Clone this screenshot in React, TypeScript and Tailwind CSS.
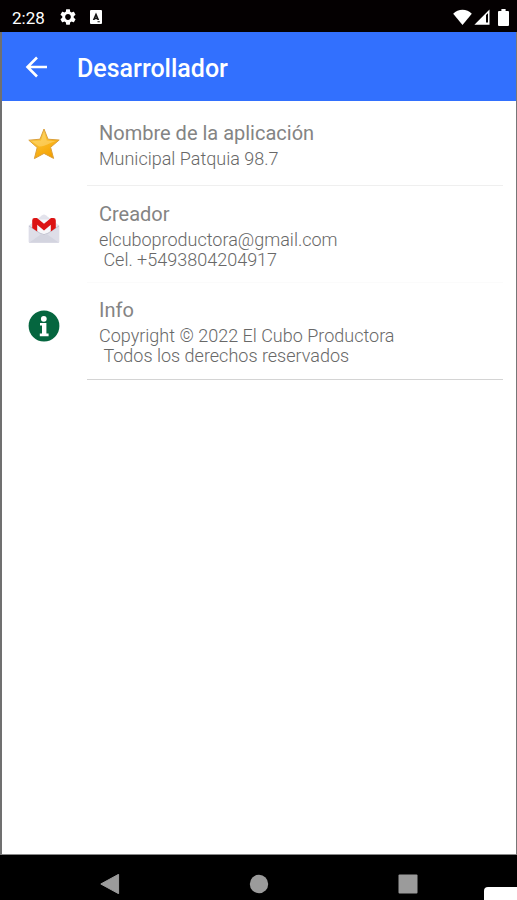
import React from "react";

type InfoItem = {
  title: string;
  lines: string[];
  icon: React.ReactNode;
  rowClass: string;
};

const StarIcon = () => (
  <svg viewBox="0 0 32 32" className="size-8" aria-hidden="true">
    <defs>
      <linearGradient id="star" x1="0" y1="0" x2="0.6" y2="1">
        <stop offset="0" stopColor="#f8d77a" />
        <stop offset="0.45" stopColor="#fbbf2c" />
        <stop offset="1" stopColor="#f5a100" />
      </linearGradient>
    </defs>
    <path
      d="M16 1 20 11.2 31.2 12 22.6 19.3 25.6 30.4 16 25.4 6.4 30.6 9.2 19.5.8 12.2 12 11.2Z"
      fill="url(#star)"
      stroke="#dba03c"
      strokeWidth="1"
      strokeLinejoin="round"
    />
    <path d="M16 4 18.8 12.4 28 13.2C22 14 17 19 11 18.4L4 13.2 13 12.4Z" fill="#fdd97a" opacity="0.55" />
  </svg>
);

const MailIcon = () => (
  <svg viewBox="0 0 32 32" className="size-8" aria-hidden="true">
    <path d="M.8 12.5 14.2 2.2Q16 1 17.8 2.2L31.2 12.5V29Q31.2 30 30.2 30H1.8Q.8 30 .8 29Z" fill="#e3e3ec" />
    <path d="M4.5 6.5H27.5V18L16 24 4.5 18Z" fill="#f7f7fa" />
    <path d="M.8 12.6 12 20.2Q16 23 20 20.2L31.2 12.6V29Q31.2 30 30.2 30H1.8Q.8 30 .8 29Z" fill="#dedee8" />
    <path d="M1.4 29.4 13 21.2Q16 23 19 21.2L30.6 29.4Z" fill="#d3d4df" />
    <path d="M1 13 12 20.2Q16 23 20 20.2L31 13" fill="none" stroke="#b9bac8" strokeWidth="0.8" />
    <path
      d="M4.2 15V7.4Q4.2 5 6.6 5H9L16 10.8 23 5H25.4Q27.8 5 27.8 7.4V15L22.8 18.4V11.8L16 17.4 9.2 11.8V18.4Z"
      fill="#dc1414"
    />
  </svg>
);

const InfoIcon = () => (
  <svg viewBox="0 0 32 32" className="size-8" aria-hidden="true">
    <circle cx="16" cy="16" r="15.4" fill="#05663f" />
    <circle cx="15.8" cy="8.8" r="2.9" fill="#fff" />
    <path d="M12 13H18.4V23.4H20.6V26.2H11.8V23.4H14V15.6H12Z" fill="#fff" />
  </svg>
);

const items: InfoItem[] = [
  {
    title: "Nombre de la aplicación",
    lines: ["Municipal Patquia 98.7"],
    icon: <StarIcon />,
    rowClass: "pt-[18px] pb-4 border-[#efefef]",
  },
  {
    title: "Creador",
    lines: ["elcuboproductora@gmail.com", " Cel. +5493804204917"],
    icon: <MailIcon />,
    rowClass: "pt-[14px] pb-3 border-[#fbfbfb]",
  },
  {
    title: "Info",
    lines: ["Copyright © 2022 El Cubo Productora", " Todos los derechos reservados"],
    icon: <InfoIcon />,
    rowClass: "pt-[13px] pb-[13px] border-[#d4d4d4]",
  },
];

const StatusBar = () => (
  <div className="flex h-8 items-center justify-between bg-[#040001] pr-2 pl-3 text-white">
    <div className="flex items-center">
      <span className="pt-1 text-[17px] leading-5">2:28</span>
      <svg viewBox="2 2 20 20" className="ml-[15px] mt-[2px] size-4" fill="#fff" aria-hidden="true">
        <path d="M19.14 12.94c.04-.3.06-.61.06-.94s-.02-.64-.07-.94l2.03-1.58c.18-.14.23-.41.12-.61l-1.92-3.32c-.12-.22-.37-.29-.59-.22l-2.39.96c-.5-.38-1.03-.7-1.62-.94l-.36-2.54c-.04-.24-.24-.41-.48-.41h-3.84c-.24 0-.43.17-.47.41l-.36 2.54c-.59.24-1.13.57-1.62.94l-2.39-.96c-.22-.08-.47 0-.59.22L2.74 8.87c-.12.21-.08.47.12.61l2.03 1.58c-.05.3-.09.63-.09.94s.02.64.07.94l-2.03 1.58c-.18.14-.23.41-.12.61l1.92 3.32c.12.22.37.29.59.22l2.39-.96c.5.38 1.03.7 1.62.94l.36 2.54c.05.24.24.41.48.41h3.84c.24 0 .44-.17.47-.41l.36-2.54c.59-.24 1.13-.56 1.62-.94l2.39.96c.22.08.47 0 .59-.22l1.92-3.32c.12-.22.07-.47-.12-.61l-2.01-1.58zM12 15.6c-1.98 0-3.6-1.62-3.6-3.6s1.62-3.6 3.6-3.6 3.6 1.62 3.6 3.6-1.62 3.6-3.6 3.6z" />
      </svg>
      <svg viewBox="0 0 12 14" className="ml-[14px] mt-[2px] h-[14px] w-3" aria-hidden="true">
        <rect width="12" height="14" rx="1" fill="#fff" />
        <path d="M2.8 10 6 2.6 9.2 10H7.4L6 6.4 4.6 10Z" fill="#111" />
        <path d="M5 7.4H7V9.2H5ZM7.5 11.3H9.8V12.3H7.5Z" fill="#111" />
      </svg>
    </div>
    <div className="flex items-center pt-[2px]">
      <svg viewBox="0 0 19 16" className="h-4 w-[19px]" fill="#fff" aria-hidden="true">
        <path d="M9.5 16 .2 4.8C5-.6 14-.6 18.8 4.8Z" />
      </svg>
      <svg viewBox="0 0 16 16" className="ml-[2px] size-4" fill="#fff" aria-hidden="true">
        <path d="M15.5.5V15.8H.4ZM12 6V13.4H14V4.2Z" fillRule="evenodd" />
      </svg>
      <svg viewBox="0 0 11 17" className="ml-2 h-[17px] w-[11px]" fill="#fff" aria-hidden="true">
        <path d="M3.4 0H7.6V2H10Q11 2 11 3V16Q11 17 10 17H1Q0 17 0 16V3Q0 2 1 2H3.4Z" />
      </svg>
    </div>
  </div>
);

const InfoRow = ({ item }: { item: InfoItem }) => (
  <li className="flex">
    <div className="w-[85px] shrink-0 pt-[27px] pl-[26px]">{item.icon}</div>
    <div className={`mr-[13px] flex-1 border-b pl-3 ${item.rowClass}`}>
      <h2 className="text-xl leading-7 font-normal text-[#848484]">{item.title}</h2>
      <p className="mt-[2px] text-lg leading-5 font-light whitespace-pre-wrap text-[#686868]">
        {item.lines.join("\n")}
      </p>
    </div>
  </li>
);

const App = () => {
  return (
    <div className="flex min-h-screen flex-col bg-black font-[Roboto,sans-serif]">
      <StatusBar />
      <div className="flex flex-1 flex-col border-r border-b border-l-2 border-r-[#777] border-b-[#888] border-l-[#707070] bg-white">
        <header className="flex h-[69px] items-center bg-[#3270fe] pl-[23px] text-white">
          <button type="button" aria-label="Volver" className="size-6">
            <svg viewBox="0 0 24 24" className="size-6" fill="none" stroke="#fff" strokeWidth="2.6" aria-hidden="true">
              <path d="M22 12H3M12 2.5 2.5 12 12 21.5" />
            </svg>
          </button>
          <h1 className="ml-7 pt-1 text-[25px] leading-8 font-medium">Desarrollador</h1>
        </header>
        <main>
          <ul>
            {items.map((item) => (
              <InfoRow key={item.title} item={item} />
            ))}
          </ul>
        </main>
      </div>
      <nav className="flex h-[45px] items-start justify-center pt-[19px]">
        <button type="button" aria-label="Atrás" className="flex w-[149px] justify-center">
          <svg viewBox="0 0 20 20" className="size-5" aria-hidden="true">
            <path d="M.8 10 18.6.3V19.7Z" fill="#9b9b9b" stroke="#9b9b9b" strokeLinejoin="round" />
          </svg>
        </button>
        <button type="button" aria-label="Inicio" className="flex w-[149px] justify-center">
          <svg viewBox="0 0 20 20" className="size-5" aria-hidden="true">
            <circle cx="10" cy="10" r="9.2" fill="#9b9b9b" />
          </svg>
        </button>
        <button type="button" aria-label="Recientes" className="flex w-[149px] justify-center">
          <svg viewBox="0 0 20 20" className="size-5" aria-hidden="true">
            <rect x="0.5" y="0.5" width="19" height="19" rx="1" fill="#9b9b9b" />
          </svg>
        </button>
      </nav>
      <div className="fixed right-0 bottom-0 h-[13px] w-[33px] rounded-tl-[4px] bg-white" />
    </div>
  );
};

export default App;
